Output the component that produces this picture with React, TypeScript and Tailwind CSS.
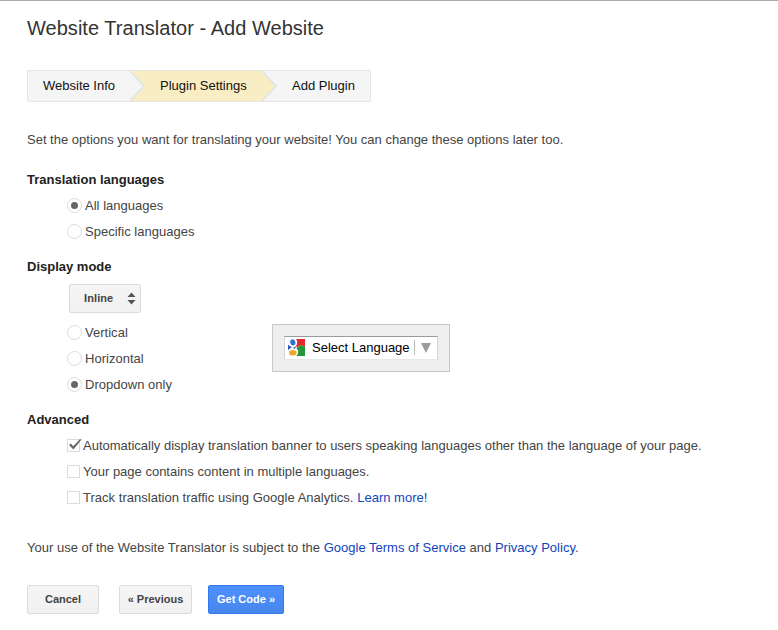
import type { ReactNode } from 'react';

function Radio({ checked, label }: { checked?: boolean; label: string }) {
  return (
    <div role="radio" aria-checked={!!checked} className="flex h-[26px] items-start pl-10">
      <span className="mt-[5px] flex size-[15px] shrink-0 items-center justify-center rounded-full border border-[#dcdcdc]">
        {checked && <span className="size-[7px] rounded-full bg-[#666]" />}
      </span>
      <span className="ml-[3px] whitespace-nowrap tracking-[0.02px]">{label}</span>
    </div>
  );
}

function Check({ checked, children }: { checked?: boolean; children: ReactNode }) {
  return (
    <div role="checkbox" aria-checked={!!checked} className="flex h-[26px] items-start pl-10">
      <span className="relative mt-[6px] size-[13px] shrink-0 border border-[#dcdcdc]">
        {checked && (
          <svg className="absolute -top-[2px] left-0 h-[13px] w-[15px]" viewBox="0 0 15 13">
            <path d="M1 7 2.8 5.6 5.2 8.2 11.8 1.2h1.9L5.5 11.4Z" fill="#666" />
          </svg>
        )}
      </span>
      <span className="ml-[3px] whitespace-nowrap">{children}</span>
    </div>
  );
}

function Heading({ children }: { children: ReactNode }) {
  return <h2 className="h-[26px] font-bold text-[#222]">{children}</h2>;
}

function StepArrow({ from }: { from: string }) {
  return (
    <svg className="h-[30px] w-4 shrink-0" viewBox="0 0 16 30">
      <path d="M0 0 14 15 0 30Z" fill={from} />
      <path d="M0 0 14 15 0 30" fill="none" stroke="#e5e5e5" strokeWidth="2" />
    </svg>
  );
}

export default function App() {
  return (
    <div className="h-[630px] w-[778px] overflow-hidden border-t border-[#aaa] bg-white pl-[27px] font-['Liberation_Sans',Arial,sans-serif] text-[13px] leading-[26px] text-[#444]">
      <h1 className="mt-[15px] h-6 text-[20px] leading-6 tracking-[0.03px] text-[#333]">Website Translator - Add Website</h1>

      <div className="mt-[30px] flex h-8 w-[344px] rounded-[2px] border border-[#e5e5e5] bg-[#f5f5f5] leading-[30px] text-[#111]">
        <div className="w-[102px] pl-[15px] whitespace-nowrap">Website Info</div>
        <div className="flex w-[132px] bg-[#f9edc3]">
          <StepArrow from="#f5f5f5" />
          <span className="ml-[14px] whitespace-nowrap">Plugin Settings</span>
        </div>
        <div className="flex">
          <StepArrow from="#f9edc3" />
          <span className="ml-[14px] whitespace-nowrap">Add Plugin</span>
        </div>
      </div>

      <p className="mt-[25px] whitespace-nowrap">
        Set the options you want for translating your website! You can change these options later too.
      </p>

      <section className="mt-[14px]">
        <Heading>Translation languages</Heading>
        <Radio checked label="All languages" />
        <Radio label="Specific languages" />
      </section>

      <section className="mt-[9px]">
        <Heading>Display mode</Heading>
        <div className="mt-1 flex">
          <div className="w-[245px]">
            <button className="mb-[7px] ml-[42px] flex h-[29px] w-[72px] items-center rounded-[2px] border border-[#dcdcdc] bg-linear-to-b from-[#f5f5f5] to-[#f1f1f1] pl-[14px] text-[11px] font-bold">
              <span className="w-[44px] pb-[2px] text-left tracking-[0.1px]">Inline</span>
              <svg className="-ml-px h-[13px] w-[9px]" viewBox="0 0 9 13">
                <path d="M.5 5 4.5.5 8.5 5ZM.5 8 4.5 12.5 8.5 8Z" fill="#555" />
              </svg>
            </button>
            <Radio label="Vertical" />
            <Radio label="Horizontal" />
            <Radio checked label="Dropdown only" />
          </div>
          <div className="mt-10 h-12 w-[178px] border border-[#c8c8c8] bg-[#eee] pt-[11px] pl-[11px]">
            <div className="flex h-6 w-[154px] items-center border border-t-[#9b9b9b] border-r-[#d5d5d5] border-b-[#e8e8e8] border-l-[#d5d5d5] bg-white pb-px pl-[3px] text-black">
              <svg className="size-[17px] shrink-0" viewBox="0 0 17 17">
                <path d="M8 0H17V8L12.5 6 9 8.5 8 7Q10.5 3.5 8 0Z" fill="#e2292b" />
                <path d="M9 8.5 12.5 6 17 8V17H8.5Q12 12.5 8.5 9.5Z" fill="#26963a" />
                <ellipse cx="4.8" cy="3.4" rx="2.5" ry="3.1" fill="#316fd2" transform="rotate(-20 4.8 3.4)" />
                <path d="M0 5.8 3.8 8.2 0 11Z" fill="#2856b6" />
                <path d="M5 9 8 7 7 10Z" fill="#2856b6" />
                <ellipse cx="4.8" cy="13.7" rx="3.8" ry="2.8" fill="#f1a72a" />
              </svg>
              <span className="ml-[7px] w-[102px] whitespace-nowrap">Select Language</span>
              <span className="h-[15px] w-px bg-[#bbb]" />
              <svg className="ml-[6px] h-[10px] w-[10px]" viewBox="0 0 10 10">
                <path d="M0 0H10L5 10Z" fill="#9b9b9b" />
              </svg>
            </div>
          </div>
        </div>
      </section>

      <section className="mt-[9px]">
        <Heading>Advanced</Heading>
        <Check checked>
          Automatically display translation banner to users speaking languages other than the language of your page.
        </Check>
        <Check>Your page contains content in multiple languages.</Check>
        <Check>
          <span className="tracking-[0.02px]">
            Track translation traffic using Google Analytics. <a className="text-[#1144bb]">Learn more!</a>
          </span>
        </Check>
      </section>

      <p className="mt-6 whitespace-nowrap tracking-[0.007px]">
        Your use of the Website Translator is subject to the <a className="text-[#1144bb]">Google Terms of Service</a> and{' '}
        <a className="text-[#1144bb]">Privacy Policy</a>.
      </p>

      <div className="mt-6 flex text-[11px] leading-[25px] font-bold">
        <button className="h-[29px] w-[72px] rounded-[2px] border border-[#dcdcdc] bg-linear-to-b from-[#f5f5f5] to-[#f1f1f1]">
          Cancel
        </button>
        <button className="ml-5 h-[29px] w-[73px] rounded-[2px] border border-[#dcdcdc] bg-linear-to-b from-[#f5f5f5] to-[#f1f1f1] whitespace-nowrap">
          « Previous
        </button>
        <button className="ml-4 h-[29px] w-[76px] rounded-[2px] border border-[#3079ed] bg-linear-to-b from-[#4d90fe] to-[#4787ed] whitespace-nowrap text-white">
          Get Code »
        </button>
      </div>
    </div>
  );
}
